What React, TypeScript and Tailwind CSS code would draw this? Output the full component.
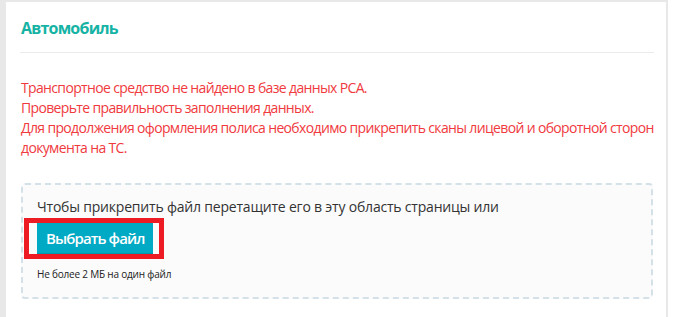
export default function App() {
  return (
    <div className="w-[674px] h-[317px] bg-white overflow-hidden" style={{ fontFamily: '"Open Sans", "Noto Sans", sans-serif' }}>
      <div className="w-[668px] h-full border-l-[6px] border-t-2 border-r-2 border-[#e8e8e8] bg-white pl-[14px] pr-[2px]">
        <div className="h-[51px] pt-[2px] mr-[10px] border-b border-[#ebebeb] flex items-center">
          <h2 className="text-[16px] font-bold text-[#16b3a5] leading-none tracking-[-0.8px] pl-px">Автомобиль</h2>
        </div>
        <div className="pt-[25px] pl-px text-[14px] leading-[20px] text-[#f03a3e] tracking-[-0.65px]">
          <p>Транспортное средство не найдено в базе данных РСА.</p>
          <p>Проверьте правильность заполнения данных.</p>
          <p>Для продолжения оформления полиса необходимо прикрепить сканы лицевой и оборотной сторон документа на ТС.</p>
        </div>
        <div className="mt-[25px] ml-px w-[632px] h-[116px] rounded border-2 border-dashed border-[#d5e1e8] bg-[#fbfbfb] pl-[14px] pt-[12px]">
          <p className="text-[14px] leading-[20px] text-[#333] tracking-[-0.2px]">
            Чтобы прикрепить файл перетащите его в эту область страницы или
          </p>
          <div className="relative mt-[6px] w-fit">
            <button className="h-[32px] px-[9px] bg-[#00a9c4] text-white text-[15px] font-semibold leading-none tracking-[-0.9px] border-b-2 border-[#0096ad]">
              Выбрать файл
            </button>
            <span className="absolute -left-[13px] -right-[11px] -top-[5px] -bottom-[4px] border-[5px] border-[#ed1c24] pointer-events-none" />
          </div>
          <p className="mt-[12px] text-[10px] leading-[14px] text-[#222] tracking-[-0.2px]">Не более 2 МБ на один файл</p>
        </div>
      </div>
    </div>
  )
}
